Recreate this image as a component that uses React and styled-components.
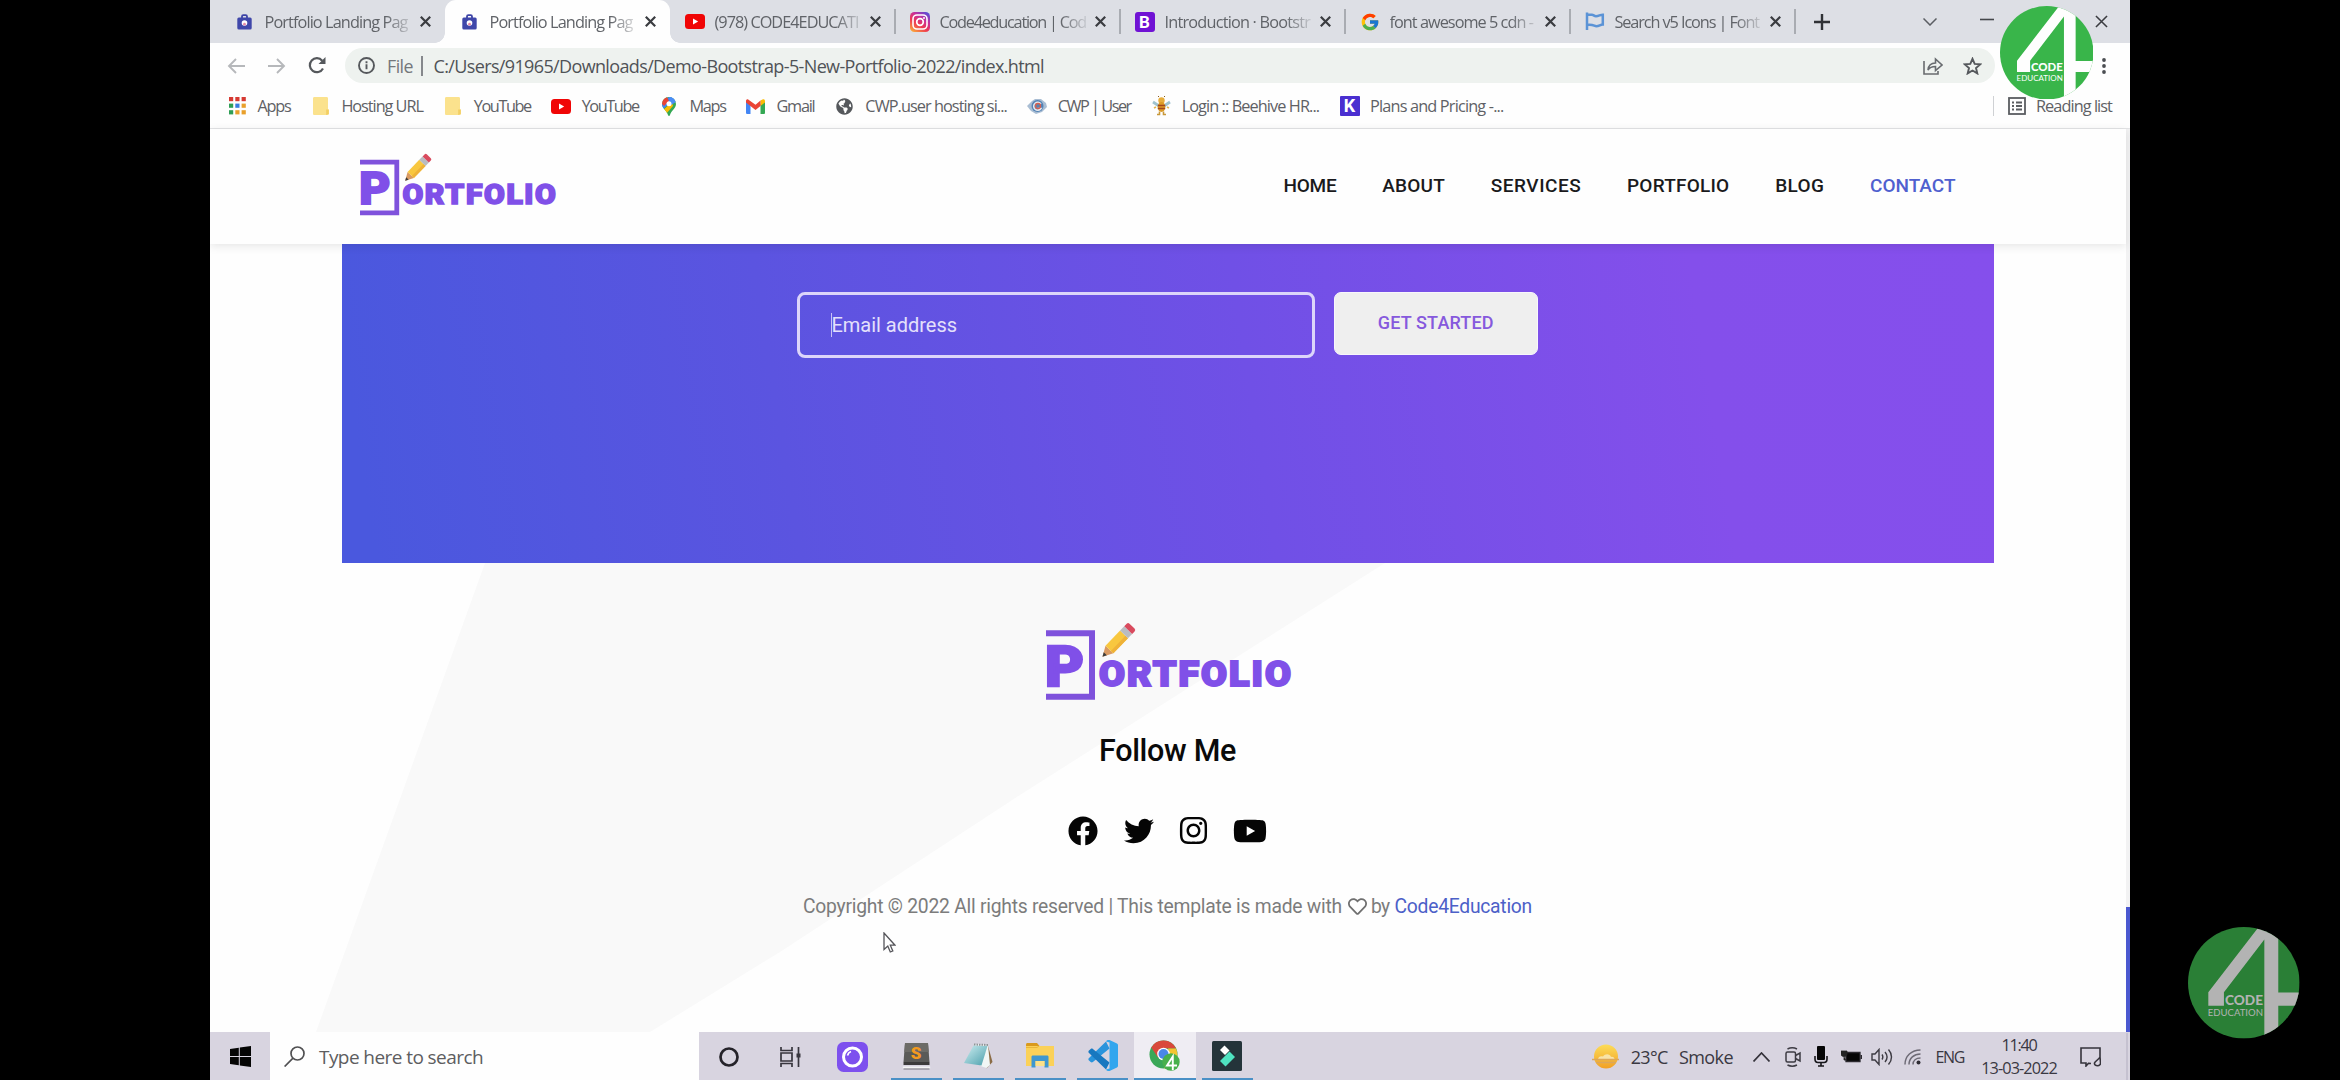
import React, { useLayoutEffect, useRef, useState } from "react";
import styled, { createGlobalStyle } from "styled-components";
import { FaFacebook, FaTwitter, FaInstagram, FaYoutube, FaRegHeart, FaGlobeAmericas } from "react-icons/fa";
import { FcGoogle } from "react-icons/fc";

const Global = createGlobalStyle`
  * { box-sizing: border-box; }
  body { margin: 0; background: #000; overflow: hidden; }
`;

const UI = `"Open Sans", "Noto Sans", sans-serif`;
const WEB = `Roboto, "Liberation Sans", sans-serif`;

/* ---------- text that tracks itself to a given measure ---------- */
const Run = styled.span`
  display: inline-block;
  flex: none;
  white-space: pre;
  font-family: ${(p) => (p.$web ? WEB : UI)};
  font-size: ${(p) => p.$size}px;
  font-weight: ${(p) => p.$weight || 400};
  line-height: ${(p) => p.$lh || 24}px;
  color: ${(p) => p.$color || "inherit"};
`;

function Text({ children, width, ...rest }) {
  const ref = useRef(null);
  const [spacing, setSpacing] = useState(0);
  useLayoutEffect(() => {
    const natural = ref.current.getBoundingClientRect().width;
    setSpacing((width - natural) / String(children).length);
  }, [children, width]);
  return (
    <Run ref={ref} style={{ letterSpacing: spacing }} {...rest}>
      {children}
    </Run>
  );
}

/* ---------- frame ---------- */
const Stage = styled.div`
  position: relative;
  width: 2340px;
  height: 1080px;
  padding: 0 210px;
  background: #000;
  overflow: hidden;
`;
const Screen = styled.div`
  width: 1920px;
  height: 1080px;
  display: flex;
  flex-direction: column;
  background: #fff;
  overflow: hidden;
`;

/* ---------- tab strip ---------- */
const TabStrip = styled.div`
  height: 43px;
  flex: none;
  display: flex;
  padding-left: 10px;
  background: #dddfe5;
`;
const Tab = styled.div`
  position: relative;
  width: 225px;
  height: 43px;
  display: flex;
  align-items: center;
  padding: 0 13px 0 14px;
  background: ${(p) => (p.$active ? "#fefefe" : "transparent")};
  border-radius: 11px 11px 0 0;
  &::before, &::after {
    content: "";
    display: ${(p) => (p.$active ? "block" : "none")};
    position: absolute;
    bottom: 0;
    width: 10px;
    height: 10px;
  }
  &::before { left: -10px; background: radial-gradient(circle at 0 0, transparent 9.5px, #fefefe 10px); }
  &::after { right: -10px; background: radial-gradient(circle at 100% 0, transparent 9.5px, #fefefe 10px); }
`;
const TabRule = styled.i`
  width: 2px;
  height: 25px;
  margin: 9px -1px 0;
  background: #a9acb2;
`;
const Slot = styled.span`
  width: ${(p) => p.$w || 21}px;
  flex: none;
  display: flex;
  justify-content: center;
  align-items: center;
  svg { display: block; }
`;
const TabTitle = styled.span`
  width: 149px;
  flex: none;
  margin: 0 6px 0 9.5px;
  color: #606368;
  -webkit-mask-image: linear-gradient(90deg, #000 120px, rgba(0, 0, 0, 0.15) 147px);
  mask-image: linear-gradient(90deg, #000 120px, rgba(0, 0, 0, 0.15) 147px);
`;
const StripTools = styled.div`
  flex: 1;
  display: flex;
  align-items: center;
  padding-left: 19px;
  color: #3c4043;
  svg { display: block; }
`;
const Gap = styled.span`
  width: ${(p) => p.$w}px;
  flex: none;
`;

const Cross = ({ s = 11, w = 2.2, c = "#3a3c40" }) => (
  <svg width={s} height={s} viewBox="0 0 11 11" stroke={c} strokeWidth={w} fill="none">
    <path d="M.8.8l9.4 9.4M10.2.8L.8 10.2" />
  </svg>
);
const BagIcon = () => (
  <svg width="15" height="16" viewBox="0 0 15 16">
    <path d="M5 4V2.6C5 1.800 5.500 1.200 6.300 1.200h2.400c.8 0 1.300.6 1.300 1.400V4" fill="none" stroke="#3d44a6" strokeWidth="1.800" />
    <rect x=".3" y="3.500" width="14.400" height="12" rx="1.500" fill="#3f47aa" />
    <circle cx="7.500" cy="9" r="2.800" fill="#fff" />
    <circle cx="7.500" cy="10.200" r="1.400" fill="#e58aa8" />
  </svg>
);
const TubeIcon = () => (
  <svg width="20" height="15" viewBox="0 0 20 15">
    <rect width="20" height="15" rx="3.500" fill="#f00505" />
    <path d="M8 4.500l5.200 3L8 10.500z" fill="#fff" />
  </svg>
);
const InstaIcon = () => (
  <svg width="20" height="20" viewBox="0 0 20 20">
    <defs>
      <linearGradient id="ig" x1="0.1" y1="1" x2=".8" y2="0">
        <stop offset="0" stopColor="#fbb03b" />
        <stop offset=".4" stopColor="#ee3a53" />
        <stop offset=".7" stopColor="#c6309c" />
        <stop offset="1" stopColor="#5b4bd6" />
      </linearGradient>
    </defs>
    <rect width="20" height="20" rx="4.500" fill="url(#ig)" />
    <rect x="3" y="3" width="14" height="14" rx="4" fill="none" stroke="#fff" strokeWidth="1.600" />
    <circle cx="10" cy="10" r="3.300" fill="none" stroke="#fff" strokeWidth="1.700" />
    <circle cx="14" cy="6" r="1" fill="#fff" />
  </svg>
);
const Square = styled.span`
  width: 20px;
  height: 20px;
  border-radius: ${(p) => p.$r}px;
  background: ${(p) => p.$bg};
  color: #fff;
  font: 700 ${(p) => p.$size}px/20px Roboto, sans-serif;
  text-align: center;
`;
const FlagIcon = () => (
  <svg width="20" height="20" viewBox="0 0 20 20" fill="none" stroke="#5b93d6" strokeWidth="2.500">
    <path d="M2 .5V18M2 2.700h5c1.500 0 2 1.500 4 1.500 3 0 4-1.500 6.800-1.500v9.800c-2.600 0-3.500 1.700-6.500 1.700-2.200 0-3-2.100-9.300-1.200" />
  </svg>
);

const TABS = [
  [<BagIcon key="i" />, "Portfolio Landing Pag", 143],
  [<BagIcon key="i" />, "Portfolio Landing Pag", 143],
  [<TubeIcon key="i" />, "(978) CODE4EDUCATI", 144],
  [<InstaIcon key="i" />, "Code4education | Cod", 146.5],
  [<Square key="i" $bg="#7012d4" $r={3} $size={17}>B</Square>, "Introduction · Bootstr", 145.5],
  [<FcGoogle key="i" size={20} />, "font awesome 5 cdn -", 143.5],
  [<FlagIcon key="i" />, "Search v5 Icons | Font", 144.5],
];

/* ---------- address bar ---------- */
const Toolbar = styled.div`
  height: 45px;
  flex: none;
  display: flex;
  align-items: center;
  padding: 0 23px 0 17px;
  background: #fefefe;
  color: #54575b;
  svg { display: block; flex: none; }
`;
const Omnibox = styled.div`
  width: 1650px;
  height: 35px;
  margin-left: 19px;
  display: flex;
  align-items: center;
  padding: 0 13px;
  border-radius: 18px;
  background: #eef2ef;
  color: #505357;
`;
const Bar = styled.i`
  width: ${(p) => p.$w || 1.5}px;
  height: ${(p) => p.$h}px;
  margin: ${(p) => p.$m};
  background: ${(p) => p.$c};
`;
const Spacer = styled.span`
  flex: 1;
`;

/* ---------- bookmarks ---------- */
const Bookmarks = styled.div`
  height: 41px;
  flex: none;
  display: flex;
  align-items: center;
  gap: 20.400px;
  padding: 0 18px 4px 17px;
  background: #fefefe;
  border-bottom: 1.500px solid #e3e4e6;
  color: #5f6165;
`;
const Bookmark = styled.span`
  display: flex;
  align-items: center;
  gap: 10.500px;
`;
const DOTS = ["#d63a32", "#d63a32", "#d63a32", "#2f9e55", "#3a7de0", "#e9a02b", "#2f9e55", "#e9a02b", "#e9a02b"];
const AppsIcon = () => (
  <svg width="17" height="18" viewBox="0 0 17 18">
    {DOTS.map((c, i) => (
      <rect key={i} x={(i % 3) * 6.3} y={Math.floor(i / 3) * 6.6} width="4.200" height="4.200" fill={c} />
    ))}
  </svg>
);
const FolderIcon = () => (
  <svg width="16" height="18" viewBox="0 0 16 18">
    <path d="M1.500 0h12c1 0 1.500.5 1.500 1.500V12l.8 1v4.200L14 18H1.500C.5 18 0 17.500 0 16.500v-15C0 .5.5 0 1.500 0z" fill="#fbe28d" />
    <path d="M13.200 12.500h2.600v4.700l-2.600.8z" fill="#f3cf62" />
  </svg>
);
const MapsIcon = () => (
  <svg width="14" height="19" viewBox="0 0 14 19">
    <defs>
      <clipPath id="pin"><path d="M7 0a7 7 0 0 1 7 7c0 4.500-4.800 6.500-6 11-.3 1.300-1.700 1.300-2 0C4.800 13.500 0 11.500 0 7a7 7 0 0 1 7-7z" /></clipPath>
    </defs>
    <g clipPath="url(#pin)">
      <rect width="14" height="19" fill="#34a853" />
      <path d="M0 13V7l9-9h5v3z" fill="#4285f4" />
      <path d="M0 0h5l2 4-5 5-2-2z" fill="#ea4335" />
      <path d="M0 14l10-9 1 4-7 8z" fill="#fbbc04" />
      <path d="M7 0h7v5L9 8z" fill="#4a8df6" />
    </g>
    <circle cx="7" cy="6.800" r="2.500" fill="#fff" />
  </svg>
);
const GmailIcon = () => (
  <svg width="19" height="15" viewBox="0 0 19 15">
    <path d="M0 2v11.500C0 14.500.5 15 1.500 15h3V5z" fill="#4285f4" />
    <path d="M19 2v11.500c0 1-.5 1.500-1.500 1.500h-3V5z" fill="#34a853" />
    <path d="M14.500 1.500L17 .3C18.200-.2 19 .8 19 2v1.500L14.500 7z" fill="#fbbc04" />
    <path d="M0 3.500V2C0 .8 1-.2 2.200.5l7.300 5.300 5-4.300V7l-5 4z" fill="#ea4335" />
  </svg>
);
const CwpIcon = () => (
  <svg width="20" height="16" viewBox="0 0 20 16">
    <path d="M0 8l5-5 3-2h6l5 4 1 4-5 5-6 2-5-3z" fill="#a9bdd3" />
    <circle cx="10.500" cy="8" r="6" fill="#5383b5" />
    <path d="M14 6a4 4 0 1 0 0 4.500H10.500" fill="none" stroke="#e7e9ee" strokeWidth="1.500" />
    <circle cx="11" cy="8" r="2.500" fill="none" stroke="#d6604f" strokeWidth="1.300" />
  </svg>
);
const BeeIcon = () => (
  <svg width="19" height="20" viewBox="0 0 19 20">
    <path d="M1 6l6 4M18 6l-6 4" stroke="#9fc3cf" strokeWidth="2.800" />
    <circle cx="9.500" cy="4.500" r="3.200" fill="#e6ad3c" />
    <path d="M7 1L6 0M12 1l1-1" stroke="#8a5a1c" />
    <ellipse cx="9.500" cy="11" rx="3.800" ry="5" fill="#dc9a26" />
    <path d="M5.800 9.500h7.400M5.800 12.500h7.400" stroke="#a3471c" strokeWidth="1.700" />
    <path d="M7.500 15.500v3H5M11.500 15.500v3H14" fill="none" stroke="#c8993c" strokeWidth="1.600" />
    <path d="M4 11l-2 1M15 11l2 1" stroke="#e2b450" strokeWidth="1.600" />
  </svg>
);

const MARKS = [
  [<AppsIcon key="i" />, "Apps", 33],
  [<FolderIcon key="i" />, "Hosting URL", 81.5],
  [<FolderIcon key="i" />, "YouTube", 57],
  [<TubeIcon key="i" />, "YouTube", 57],
  [<MapsIcon key="i" />, "Maps", 36],
  [<GmailIcon key="i" />, "Gmail", 38],
  [<FaGlobeAmericas key="i" size={17} color="#55585c" />, "CWP.user hosting si...", 141.5],
  [<CwpIcon key="i" />, "CWP | User", 73],
  [<BeeIcon key="i" />, "Login :: Beehive HR...", 137.5],
  [<Square key="i" $bg="#4a2fd0" $r={1} $size={18}>K</Square>, "Plans and Pricing -...", 133.5],
];

/* ---------- web page ---------- */
const Page = styled.main`
  flex: 1;
  min-height: 0;
  display: flex;
  background: #fefefe;
`;
const Document = styled.div`
  flex: 1;
  display: flex;
  flex-direction: column;
`;
const Scrollbar = styled.div`
  width: 4px;
  padding-top: 778px;
  background: #f2f2f3;
`;
const Thumb = styled.div`
  height: 126px;
  background: #4a58d0;
`;
const SiteHeader = styled.header`
  position: relative;
  z-index: 1;
  height: 114.5px;
  flex: none;
  display: flex;
  align-items: center;
  justify-content: space-between;
  padding: 0 170.500px 0 149.500px;
  background: #fefefe;
  box-shadow: 0 2px 9px rgba(0, 0, 0, 0.1);
`;
const Brand = styled.a`
  padding-bottom: 3px;
  svg { display: block; }
`;
const Nav = styled.nav`
  display: flex;
  gap: 45.800px;
`;
const Hero = styled.section`
  width: 1652px;
  height: 319.5px;
  flex: none;
  margin-left: 132px;
  display: flex;
  align-items: flex-start;
  gap: 19px;
  padding: 48.500px 0 0 455px;
  background: linear-gradient(81deg, #4a58de 2%, #5b54e0 27%, #7050e6 55%, #844feb 82%, #854fec 100%);
`;
const EmailField = styled.div`
  width: 518px;
  height: 66px;
  display: flex;
  align-items: center;
  padding-left: 30.500px;
  border: 3px solid #dcd5fa;
  border-radius: 8px;
`;
const CTA = styled.div`
  width: 203.5px;
  height: 63px;
  display: flex;
  align-items: center;
  justify-content: center;
  padding-bottom: 2px;
  background: #efefef;
  border: 1.500px solid #f8f6fc;
  border-radius: 7px;
`;
const SiteFooter = styled.footer`
  position: relative;
  flex: 1;
  display: flex;
  flex-direction: column;
  align-items: center;
  padding: 59px 1px 0 0;
  > * { position: relative; }
`;
const Backdrop = styled.svg`
  && { position: absolute; }
  left: 0;
  top: 0;
`;
const FooterBrand = styled.a`
  padding-left: 4px;
  svg { display: block; }
`;
const Heading = styled.h4`
  margin: 31px 0 0;
  height: 38px;
`;
const Socials = styled.div`
  height: 34px;
  margin-top: 43.500px;
  display: flex;
  align-items: center;
  color: #050505;
  svg { display: block; }
`;
const Copyright = styled.p`
  margin: 47.500px 0 0;
  display: flex;
  align-items: center;
  svg { display: block; margin: 0 4.500px 2px 5.500px; }
`;
const Pointer = styled.svg`
  position: absolute;
  left: 883px;
  top: 932px;
`;

function Logo({ width }) {
  return (
    <svg width={width} height={(width * 79) / 247} viewBox="0 0 247 79">
      <path d="M0 11.300H46V74.800H0" fill="none" stroke="#7f52dc" strokeWidth="6" />
      <g fill="#8050e8" stroke="#8050e8" fontFamily="Roboto, sans-serif" fontWeight="900">
        <text x="-1" y="63.800" fontSize="56" strokeWidth="2.400" textLength="39" lengthAdjust="spacingAndGlyphs">P</text>
        <text x="53" y="63.600" fontSize="35" strokeWidth="2" letterSpacing="1.900" textLength="194" lengthAdjust="spacingAndGlyphs">ORTFOLIO</text>
      </g>
      <g transform="translate(56.500 34.700) rotate(-46)">
        <path d="M0 0l10-5.500v11z" fill="#d99a62" />
        <path d="M0 0l4-2.200v4.400z" fill="#3c3c3c" />
        <path d="M10-5.500h21v11H10z" fill="#f8c73f" />
        <path d="M10 2h21v3.500H10z" fill="#efb238" />
        <path d="M31-5.500h6v11h-6z" fill="#b9bcc1" />
        <path d="M37-5.500h3.500a2 2 0 0 1 2 2v7a2 2 0 0 1-2 2H37z" fill="#d94b5e" />
      </g>
    </svg>
  );
}

/* ---------- channel badge ---------- */
const Badge = styled.svg`
  position: absolute;
  left: ${(p) => p.$x}px;
  top: ${(p) => p.$y}px;
`;
function Channel({ x, y, size, green, ink, id }) {
  return (
    <Badge $x={x} $y={y} width={size} height={size} viewBox="0 0 100 100">
      <defs><clipPath id={id}><circle cx="50" cy="50" r="50" /></clipPath></defs>
      <g clipPath={`url(#${id})`}>
        <rect width="100" height="100" fill={green} />
        <path d="M63.300 0L18.200 58.500v12h14v-12L68.400 11.300V100h12.500V70.500H100V58.800H80.900V0z" fill={ink} />
        <g fill={ink} fontFamily="Lato, sans-serif">
          <text x="33.200" y="69.700" fontSize="12.400" fontWeight="900" textLength="34" lengthAdjust="spacingAndGlyphs">CODE</text>
          <text x="17.700" y="79.800" fontSize="8.600" textLength="49.500" lengthAdjust="spacingAndGlyphs">EDUCATION</text>
        </g>
      </g>
    </Badge>
  );
}

/* ---------- taskbar ---------- */
const Taskbar = styled.div`
  height: 48px;
  flex: none;
  display: flex;
  background: #d8d4e0;
  color: #3a3842;
  svg { display: block; }
`;
const Cell = styled.div`
  width: ${(p) => p.$w}px;
  flex: none;
  display: flex;
  align-items: center;
  justify-content: center;
  padding-top: 1px;
`;
const SearchBox = styled.div`
  width: 428.5px;
  flex: none;
  display: flex;
  align-items: center;
  gap: 14px;
  padding: 1px 0 0 14px;
  background: #fefefe;
  color: #5d5d5f;
`;
const PinnedApp = styled.div`
  width: 62.1px;
  flex: none;
  display: flex;
  flex-direction: column;
  align-items: center;
  background: ${(p) => (p.$on ? "#efedf3" : "transparent")};
  > span { flex: 1; display: flex; align-items: center; padding-top: 2px; }
  > i { width: ${(p) => (p.$on ? 62 : 51)}px; height: 2.500px; background: #4a90c6; }
`;
const Tray = styled.div`
  flex: 1;
  display: flex;
  align-items: center;
  justify-content: flex-end;
  padding: 1px 0 0;
`;
const Clock = styled.div`
  width: 76px;
  margin-left: 17px;
  display: flex;
  flex-direction: column;
  align-items: center;
`;
const Edge = styled.i`
  width: 2px;
  height: 48px;
  margin-left: 25px;
  margin-right: 2px;
  background: #c5c1d0;
`;

const WindowsIcon = () => (
  <svg width="21" height="21" viewBox="0 0 21 21" fill="#050505">
    <path d="M0 3l8.800-1.300v8.300H0zM9.800 1.500L21 0v10H9.800zM0 11h8.800v8.300L0 18zM9.800 11H21v10L9.800 19.500z" />
  </svg>
);
const SublimeIcon = () => (
  <svg width="29" height="28" viewBox="0 0 29 28">
    <path d="M3 1h23l1.500 19h-26z" fill="#5a5a58" />
    <path d="M3 1h23l.7 9H2.300z" fill="#6c6b67" />
    <path d="M1.500 20h26v3h-26z" fill="#3c3b3b" />
    <path d="M.8 24.500h27.400v2H.8z" fill="#f4f4f4" />
    <path d="M1.500 26.500h26v1h-26z" fill="#77757c" />
    <text x="14.200" y="16.500" textAnchor="middle" fill="#f39a1e" fontFamily="Roboto, sans-serif" fontWeight="900" fontSize="17">S</text>
  </svg>
);
const NotepadIcon = () => (
  <svg width="29" height="26" viewBox="0 0 29 26">
    <defs><linearGradient id="np" x1="0" y1="0" x2="1" y2="1"><stop offset="0" stopColor="#cfeff2" /><stop offset="1" stopColor="#4a9eab" /></linearGradient></defs>
    <path d="M24 3l4.500 16-6 6.500z" fill="#8a6b45" />
    <path d="M10 1l14 1 2 20-3.500 3-6-2z" fill="#f1f6f5" />
    <path d="M9.500 2.500L23.500 3 17.500 22.500 0 20z" fill="url(#np)" />
    <path d="M10 1.500l14 .5" stroke="#8f9497" strokeWidth="2" strokeDasharray="1.500 1" />
  </svg>
);
const ExplorerIcon = () => (
  <svg width="29" height="25" viewBox="0 0 29 25">
    <path d="M0 1.500C0 .7.500 0 1.500 0H11l2.500 3H0z" fill="#d99a1e" />
    <path d="M0 3h28v20H0z" fill="#fbd158" />
    <path d="M0 4.500h11l2-1.500" fill="none" stroke="#e9b63a" />
    <path d="M5.500 24.500V14c0-1 .6-1.500 1.500-1.500h14c1 0 1.500.5 1.500 1.500v10.500h-4V18h-9v6.500z" fill="#3f97cf" />
    <path d="M9.500 18h9v5h-9z" fill="#fce089" />
  </svg>
);
const CodeIcon = () => (
  <svg width="31" height="31" viewBox="0 0 31 31">
    <path d="M22.500 8.500L5.900 22c-.7.600-1.500.6-2.200 0L2 20.500c-.8-.8-.8-1.700 0-2.500L19 1.500z" fill="#2a94dc" />
    <path d="M22.500 22.500L5.900 9c-.7-.6-1.500-.6-2.200 0L2 10.500c-.8.8-.8 1.700 0 2.500l17 16.500z" fill="#1878c0" />
    <path d="M22.500 0L30 3.500c.7.300 1 .9 1 1.500v21c0 .6-.3 1.200-1 1.500L22.500 31c-1.500.5-3-.5-3.500-1.500l3.500-1V2.500L19 1.500c.5-1 2-2 3.500-1.500z" fill="#32a6ee" />
  </svg>
);
const ChromeIcon = () => (
  <svg width="31" height="31" viewBox="0 0 31 31">
    <circle cx="14.500" cy="14.500" r="14" fill="#3aa757" />
    <path d="M2.300 7.500A14 14 0 0 1 27 8.500H14.500L9 17.500z" fill="#d9483b" />
    <path d="M27 8.500A14 14 0 0 1 15 28.500L20.500 17l-1.500-8.500z" fill="#f4c531" />
    <circle cx="14.500" cy="14" r="6.300" fill="#fff" />
    <circle cx="14.500" cy="14" r="5" fill="#4a87e8" />
    <circle cx="22" cy="22" r="8.700" fill="#48b04c" />
    <path d="M23.800 30v-13.500L18 25.500h10" fill="none" stroke="#fff" strokeWidth="1.900" />
  </svg>
);
const RingAppIcon = () => (
  <svg width="31" height="30" viewBox="0 0 31 30">
    <rect width="31" height="30" rx="6.500" fill="#7d50ee" />
    <circle cx="15.500" cy="15" r="9" fill="none" stroke="#fff" strokeWidth="3" />
    <path d="M10.500 13.500a5.500 5.500 0 0 1 3.500-4" fill="none" stroke="#fff" strokeWidth="1.700" />
  </svg>
);
const FilmoraIcon = () => (
  <svg width="30" height="30" viewBox="0 0 30 30">
    <rect width="30" height="30" rx="1.500" fill="#24343a" />
    <path d="M12.500 4.500l5 5-4.500 4.500-5-5z" fill="#fff" />
    <path d="M17.500 10.500l5.500 5.500-9.500 9.500-5.500-5.500z" fill="#4fe3c1" />
  </svg>
);
const TaskViewIcon = () => (
  <svg width="22" height="20" viewBox="0 0 22 20" fill="none" stroke="#38363e" strokeWidth="1.700">
    <path d="M2 0v3.500h11V0M2 20v-3.500h11V20M2 6h11v8H2zM19.500 0v20" />
    <path d="M17.500 6.500h4v4h-4z" fill="#38363e" stroke="none" />
  </svg>
);

const APPS = [
  [<SublimeIcon key="i" />],
  [<NotepadIcon key="i" />],
  [<ExplorerIcon key="i" />],
  [<CodeIcon key="i" />],
  [<ChromeIcon key="i" />, true],
  [<FilmoraIcon key="i" />],
];

const NAV = [["HOME", 52.8], ["ABOUT", 62.8], ["SERVICES", 90.4], ["PORTFOLIO", 102.4], ["BLOG", 49], ["CONTACT", 85.5]];

export default function App() {
  return (
    <Stage>
      <Global />
      <Screen>
        <TabStrip>
          {TABS.map(([icon, title, w], i) => (
            <React.Fragment key={i}>
              <Tab $active={i === 1}>
                <Slot>{icon}</Slot>
                <TabTitle><Text width={w} $size={16.3} $lh={26}>{title}</Text></TabTitle>
                <Cross />
              </Tab>
              {i > 1 && <TabRule />}
            </React.Fragment>
          ))}
          <StripTools>
            <svg width="16" height="16" viewBox="0 0 16 16" stroke="#303236" strokeWidth="2.400"><path d="M8 0v16M0 8h16" /></svg>
            <Gap $w={93} />
            <svg width="14" height="8" viewBox="0 0 14 8" fill="none" stroke="#5b5e63" strokeWidth="1.500"><path d="M.5.5L7 7l6.500-6.500" /></svg>
            <Gap $w={43} />
            <svg width="14" height="8" viewBox="0 0 14 8" stroke="#44474b" strokeWidth="1.600"><path d="M0 1.500h14" /></svg>
            <Gap $w={101} />
            <Cross s={13} w={1.3} />
          </StripTools>
        </TabStrip>

        <Toolbar>
          <svg width="18" height="16" viewBox="0 0 18 16" fill="none" stroke="#b6b8bb" strokeWidth="1.900"><path d="M18 8H2M9 1L2 8l7 7" /></svg>
          <Gap $w={23} />
          <svg width="18" height="16" viewBox="0 0 18 16" fill="none" stroke="#b6b8bb" strokeWidth="1.900"><path d="M0 8h16M9 1l7 7-7 7" /></svg>
          <Gap $w={22} />
          <svg width="18" height="17" viewBox="0 0 18 17" fill="none" stroke="#55585c" strokeWidth="2.200">
            <path d="M15 11.500a7 7 0 1 1-.8-7.800" /><path d="M17.500 0v7h-7z" fill="#55585c" stroke="none" />
          </svg>
          <Omnibox>
            <svg width="17" height="17" viewBox="0 0 17 17" fill="none" stroke="#55585c" strokeWidth="1.900">
              <circle cx="8.500" cy="8.500" r="7.500" /><path d="M8.500 7.300v5M8.500 4.200v2" />
            </svg>
            <Gap $w={12} />
            <Text width={26} $size={17.8} $color="#74777b">File</Text>
            <Bar $h={20} $m="0 11px 0 8px" $c="#85888c" />
            <Text width={610.5} $size={18}>C:/Users/91965/Downloads/Demo-Bootstrap-5-New-Portfolio-2022/index.html</Text>
            <Spacer />
            <svg width="20" height="18" viewBox="0 0 20 18" fill="none" stroke="#686b6f" strokeWidth="1.600">
              <path d="M1 4v13h14v-3M5 13c.5-5 3.500-7 7.500-7V2l6.500 6-6.500 5.500v-4C9 9.500 6.500 10.500 5 13z" />
            </svg>
            <Gap $w={20} />
            <svg width="19" height="18" viewBox="0 0 19 18" fill="none" stroke="#55585c" strokeWidth="1.900">
              <path d="M9.500 1.800l2.200 5.100 5.500.5-4.200 3.600 1.300 5.400-4.800-2.900-4.800 2.900 1.300-5.400-4.200-3.600 5.500-.5z" />
            </svg>
          </Omnibox>
          <Spacer />
          <svg width="6" height="18" viewBox="0 0 6 18" fill="#4b4e52"><circle cx="3" cy="3" r="1.900" /><circle cx="3" cy="9" r="1.900" /><circle cx="3" cy="15" r="1.900" /></svg>
        </Toolbar>

        <Bookmarks>
          {MARKS.map(([icon, label, w], i) => (
            <Bookmark key={i}>
              <Slot $w={20}>{icon}</Slot>
              <Text width={w} $size={16.3}>{label}</Text>
            </Bookmark>
          ))}
          <Spacer />
          <Bookmark>
            <Bar $h={20} $m="0 3px 0 0" $c="#cfd1d4" />
            <svg width="18" height="18" viewBox="0 0 18 18" fill="none" stroke="#5a5d61" strokeWidth="1.800">
              <rect x="1" y="1" width="16" height="16" /><path d="M4 5.500h2M4 9h2M4 12.500h2M8 5.500h6M8 9h6M8 12.500h6" />
            </svg>
            <Text width={76} $size={16.3}>Reading list</Text>
          </Bookmark>
        </Bookmarks>

        <Page>
          <Document>
            <SiteHeader>
              <Brand><Logo width={197.5} /></Brand>
              <Nav>
                {NAV.map(([t, w]) => (
                  <Text key={t} width={w} $web $size={19} $weight={500} $color={t === "CONTACT" ? "#4f60cf" : "#1a1a1c"}>{t}</Text>
                ))}
              </Nav>
            </SiteHeader>
            <Hero>
              <EmailField>
                <Bar $w={1} $h={24} $m="0 0 0 0" $c="#c9c2f5" />
                <Text width={125.5} $web $size={20} $color="#e4e0fb">Email address</Text>
              </EmailField>
              <CTA><Text width={116} $web $size={18} $weight={500} $color="#8659dd">GET STARTED</Text></CTA>
            </Hero>
            <SiteFooter>
              <Backdrop width="1916" height="469" viewBox="0 0 1916 469">
                <path d="M275 0h900L810 232 570 389 440 469H106z" fill="#f9f9f9" />
              </Backdrop>
              <FooterBrand><Logo width={247} /></FooterBrand>
              <Heading><Text width={137} $web $size={30.5} $weight={500} $lh={38} $color="#0a0a0a">Follow Me</Text></Heading>
              <Socials>
                <FaFacebook size={30} />
                <Gap $w={26} />
                <FaTwitter size={30} />
                <Gap $w={24.5} />
                <FaInstagram size={31} />
                <Gap $w={24} />
                <FaYoutube size={34} />
              </Socials>
              <Copyright>
                <Text width={539} $web $size={19.3} $color="#7c7c7c">Copyright © 2022 All rights reserved | This template is made with</Text>
                <FaRegHeart size={19} color="#6f6f6f" />
                <Text width={18.500} $web $size={19.3} $color="#7c7c7c">by</Text>
                <Gap $w={5} />
                <Text width={137.500} $web $size={19.3} $color="#4c60c8">Code4Education</Text>
              </Copyright>
            </SiteFooter>
          </Document>
          <Scrollbar><Thumb /></Scrollbar>
        </Page>

        <Taskbar>
          <Cell $w={60}><WindowsIcon /></Cell>
          <SearchBox>
            <svg width="21" height="21" viewBox="0 0 21 21" fill="none" stroke="#505052" strokeWidth="1.700"><circle cx="13.500" cy="7.500" r="6.500" /><path d="M9 12.200L.6 20.500" /></svg>
            <Text width={164} $size={19}>Type here to search</Text>
          </SearchBox>
          <Cell $w={61}><svg width="20" height="20" viewBox="0 0 20 20"><circle cx="10" cy="10" r="8.500" fill="none" stroke="#25232a" strokeWidth="2.700" /></svg></Cell>
          <Cell $w={60}><TaskViewIcon /></Cell>
          <Cell $w={66}><RingAppIcon /></Cell>
          {APPS.map(([icon, on], i) => (
            <PinnedApp key={i} $on={on}><span>{icon}</span><i /></PinnedApp>
          ))}
          <Tray>
            <svg width="27" height="25" viewBox="0 0 27 25">
              <defs><linearGradient id="sun" x1="0" y1="0" x2="0" y2="1"><stop offset="0" stopColor="#fcdc58" /><stop offset="1" stopColor="#f2a024" /></linearGradient></defs>
              <circle cx="14" cy="12.500" r="12" fill="url(#sun)" />
              <path d="M6 15.500c0-3 3-4 5-3 2-3 7-3 8 .5 2-.5 3.500.5 3.500 2.500z" fill="#f8e3a8" />
              <path d="M0 15.500h27M4 18.500h20" stroke="#dba75b" strokeWidth="1.500" />
            </svg>
            <Gap $w={11.500} />
            <Text width={37} $size={18}>23°C</Text>
            <Gap $w={11.300} />
            <Text width={54} $size={18}>Smoke</Text>
            <Gap $w={20} />
            <svg width="17" height="10" viewBox="0 0 17 10" fill="none" stroke="#35333b" strokeWidth="1.700"><path d="M.5 9.500l8-8.500 8 8.500" /></svg>
            <Gap $w={14.500} />
            <svg width="16" height="20" viewBox="0 0 16 20" fill="none" stroke="#3d3b43" strokeWidth="1.500"><rect x="1" y="5" width="9.500" height="10" rx="1.500" /><path d="M10.500 8.500L15 6v8l-4.500-2.500M2.500 2c3-1.500 6.500-1.500 9.500 0M2.500 18c3 1.500 6.500 1.500 9.500 0" /></svg>
            <Gap $w={13} />
            <svg width="14" height="21" viewBox="0 0 14 21" fill="none" stroke="#17161a" strokeWidth="1.600"><rect x="3" y="0" width="8" height="14" rx="1" fill="#050505" stroke="none" /><path d="M1 10v3c0 2 1 3.500 3 3.500h6c2 0 3-1.500 3-3.500v-3M7 16v4M4 20h6" /></svg>
            <Gap $w={13} />
            <svg width="21" height="14" viewBox="0 0 21 14"><path d="M5 2.500h14v9H5z" fill="#050505" stroke="#2c2a30" strokeWidth="1.300" /><path d="M19.500 5h1.500v4h-1.500z" fill="#2c2a30" /><path d="M0 1h6v3c0 1.500-1 2.500-3 2.500S0 5.500 0 4zM3 6.500V10h2" fill="#222" stroke="#222" strokeWidth=".8" /></svg>
            <Gap $w={9} />
            <svg width="22" height="18" viewBox="0 0 22 18" fill="none" stroke="#3d3b43" strokeWidth="1.400"><path d="M1 6h3l4-4.500v15L4 12H1zM11 6.500c1 1.500 1 3.500 0 5M14 4c2.500 3 2.500 7 0 10M17.500 1.500c4 4.500 4 10.500 0 15" /></svg>
            <Gap $w={11} />
            <svg width="17" height="16" viewBox="0 0 17 16" fill="none" stroke="#6d6a75" strokeWidth="1.500"><path d="M1 15.500C1 7 7.500 1 16.500 1M5 15.500C5 9 10 5 16.500 5M9 15.500C9 11.500 12 9 16.500 9" /><circle cx="14.500" cy="13.500" r="2" fill="#2e2c33" stroke="none" /></svg>
            <Gap $w={15} />
            <Text width={28.500} $size={16}>ENG</Text>
            <Clock>
              <Text width={35} $size={16.3} $lh={23}>11:40</Text>
              <Text width={75.500} $size={16.3} $lh={23}>13-03-2022</Text>
            </Clock>
            <Gap $w={23} />
            <svg width="21" height="20" viewBox="0 0 21 20" fill="none" stroke="#35333b" strokeWidth="1.600"><path d="M11 16.500l-2.500-.2L6 19v-3H1V1h19v9M20 10c-1 2-5 4.500-5.500 6-.3 2 1.500 2.800 3 2.800 2 0 3.300-1.500 3-3.300z" /></svg>
            <Edge />
          </Tray>
        </Taskbar>
      </Screen>

      <Channel id="c1" x={1999.5} y={5.500} size={93.5} green="#39b54a" ink="#fefefe" />
      <Channel id="c2" x={2188.3} y={927.3} size={111.600} green="#2a7f36" ink="#b3b3b3" />
      <Pointer width="13" height="21" viewBox="0 0 13 21"><path d="M1 1v16.500l3.800-3.500 2.500 6 2.500-1-2.500-5.800H12z" fill="#fff" stroke="#55555a" strokeWidth="1.300" /></Pointer>
    </Stage>
  );
}
